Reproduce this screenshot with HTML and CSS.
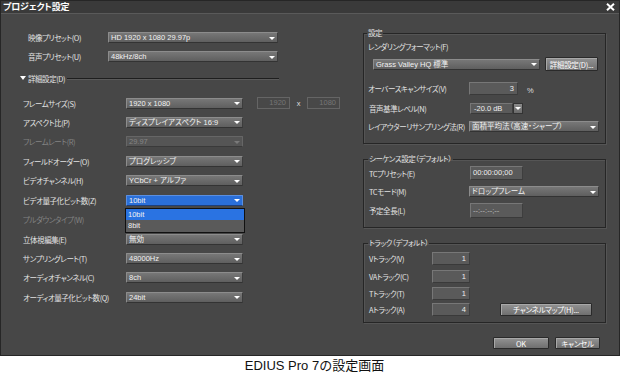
FILE: index.html
```html
<!DOCTYPE html>
<html lang="ja">
<head>
<meta charset="utf-8">
<title>プロジェクト設定</title>
<link rel="stylesheet" href="styles.css">
</head>
<body>
<div class="dialog">
  <div class="titlebar">
    <span class="title">プロジェクト設定</span>
    <svg class="close" width="9" height="8" viewBox="0 0 9 8"><path d="M1 0.8 L8 7.2 M8 0.8 L1 7.2" stroke="#fff" stroke-width="2"/></svg>
  </div>
  <div class="main">
    <div class="left">
      <div class="prow"><span class="plabel">映像プリセット(O)</span><div class="dd dd-preset"><span>HD 1920 x 1080 29.97p</span></div></div>
      <div class="prow"><span class="plabel">音声プリセット(U)</span><div class="dd dd-preset"><span>48kHz/8ch</span></div></div>
      <div class="dhead"><i class="tri"></i><span class="dhead-text">詳細設定(D)</span><span class="rule"></span></div>
      <div class="drows">
        <div class="drow"><span class="dlabel">フレームサイズ(S)</span><div class="dd dd-detail"><span>1920 x 1080</span></div><div class="box box-dis">1920</div><span class="times">x</span><div class="box box-dis">1080</div></div>
        <div class="drow"><span class="dlabel">アスペクト比(P)</span><div class="dd dd-detail"><span>ディスプレイアスペクト 16:9</span></div></div>
        <div class="drow dis"><span class="dlabel">フレームレート(R)</span><div class="dd dd-detail dd-dis"><span>29.97</span></div></div>
        <div class="drow"><span class="dlabel">フィールドオーダー(O)</span><div class="dd dd-detail"><span>プログレッシブ</span></div></div>
        <div class="drow"><span class="dlabel">ビデオチャンネル(H)</span><div class="dd dd-detail"><span>YCbCr + アルファ</span></div></div>
        <div class="drow"><span class="dlabel">ビデオ量子化ビット数(Z)</span><div class="dd dd-detail dd-sel"><span>10bit</span>
          <div class="popup"><div class="opt opt-sel">10bit</div><div class="opt">8bit</div></div></div></div>
        <div class="drow dis"><span class="dlabel">プルダウンタイプ(W)</span></div>
        <div class="drow"><span class="dlabel">立体視編集(E)</span><div class="dd dd-detail"><span>無効</span></div></div>
        <div class="drow"><span class="dlabel">サンプリングレート(T)</span><div class="dd dd-detail"><span>48000Hz</span></div></div>
        <div class="drow"><span class="dlabel">オーディオチャンネル(C)</span><div class="dd dd-detail"><span>8ch</span></div></div>
        <div class="drow"><span class="dlabel">オーディオ量子化ビット数(Q)</span><div class="dd dd-detail"><span>24bit</span></div></div>
      </div>
    </div>
    <div class="right">
      <fieldset class="grp grp1">
        <legend>設定</legend>
        <div class="g1-label">レンダリングフォーマット(F)</div>
        <div class="fmt-row"><div class="dd dd-fmt"><span>Grass Valley HQ 標準</span></div><div class="btn btn-detail">詳細設定(D)...</div></div>
        <div class="os-row"><span class="rlabel">オーバースキャンサイズ(V)</span><div class="box box-os">3</div><span class="pct">%</span></div>
        <div class="al-row"><span class="rlabel">音声基準レベル(N)</span><div class="box box-al">-20.0 dB</div><div class="spin"></div></div>
        <div class="rs-row"><span class="rlabel">レイアウターリサンプリング法(R)</span><div class="dd dd-wide"><span>面積平均法（高速・シャープ）</span></div></div>
      </fieldset>
      <fieldset class="grp grp2">
        <legend>シーケンス設定（デフォルト）</legend>
        <div class="tc-row"><span class="rlabel">TCプリセット(E)</span><div class="box box-tc">00:00:00;00</div></div>
        <div class="tm-row"><span class="rlabel">TCモード(M)</span><div class="dd dd-wide"><span>ドロップフレーム</span></div></div>
        <div class="len-row"><span class="rlabel">予定全長(L)</span><div class="box box-tc box-len">--:--:--;--</div></div>
      </fieldset>
      <fieldset class="grp grp3">
        <legend>トラック（デフォルト）</legend>
        <div class="trk trk-v"><span class="tlabel">Vトラック(V)</span><div class="box box-trk">1</div></div>
        <div class="trk trk-va"><span class="tlabel">VAトラック(C)</span><div class="box box-trk">1</div></div>
        <div class="trk trk-t"><span class="tlabel">Tトラック(T)</span><div class="box box-trk">1</div></div>
        <div class="trk trk-a"><span class="tlabel">Aトラック(A)</span><div class="box box-trk">4</div><div class="btn btn-map">チャンネルマップ(H)...</div></div>
      </fieldset>
      <div class="actions"><div class="btn btn-ok">OK</div><div class="btn btn-cancel">キャンセル</div></div>
    </div>
  </div>
</div>
<div class="caption">EDIUS Pro 7の設定画面</div>
</body>
</html>
```

FILE: styles.css
```css
* { box-sizing: border-box; }
html, body { margin: 0; padding: 0; background: #fff; }
body {
  width: 620px; height: 375px; overflow: hidden;
  font-family: "Liberation Sans", "Noto Sans CJK JP", sans-serif;
  font-feature-settings: "palt";
}
.dialog {
  width: 620px; height: 356px;
  background: #474747;
  border: 1px solid #262626;
  display: flex; flex-direction: column;
}
.titlebar {
  height: 13px; flex: none;
  background: #3a3a3a;
  border-bottom: 1px solid #5a5a5a;
  display: flex; align-items: center; justify-content: space-between;
  padding: 0 4px 0 2px;
}
.title { color: #fff; font-weight: bold; font-size: 9px; line-height: 12px; font-family: "Noto Sans CJK JP", sans-serif; letter-spacing: -0.2px; }
.close { display: block; }
.main { flex: 1; display: flex; }
.left { width: 362px; flex: none; padding-top: 14px; }
.right { width: 243px; flex: none; padding-top: 14px; }

/* label text */
.plabel, .dlabel, .rlabel, .tlabel, .g1-label, legend, .dhead-text {
  color: #e2e2e2; font-size: 7.5px; white-space: nowrap;
  font-family: "Noto Sans CJK JP", sans-serif;
  font-feature-settings: "palt";
  letter-spacing: -0.45px;
}

/* dropdowns */
.dd {
  position: relative;
  display: flex; align-items: center; justify-content: space-between;
  height: 11px;
  background: linear-gradient(#777, #5f5f5f);
  border: 1px solid #8c8c8c;
  border-bottom-color: #333; border-right-color: #3c3c3c;
  border-radius: 1px;
  color: #f2f2f2; font-size: 7.5px; line-height: 9px;
  padding: 0 2px 0 2px;
  white-space: nowrap;
}
.dd::after {
  content: ""; flex: none;
  width: 0; height: 0;
  border-left: 3px solid transparent; border-right: 3px solid transparent;
  border-top: 3px solid #fff;
  margin-top: 1px;
}
.dd-dis { background: #555; border-color: #666; border-bottom-color: #3a3a3a; color: #858585; }
.dd-dis::after { border-top-color: #7a7a7a; }
.dd-sel { background: #2a6fd9; border-color: #5a8fe0; border-bottom-color: #1d3f7a; }

.prow { height: 19px; display: flex; align-items: center; padding-left: 27px; }
.plabel { width: 80px; }
.dd-preset { width: 170px; }

.dhead { height: 18px; margin-top: 3px; display: flex; align-items: center; padding-left: 19px; }
.tri { width: 0; height: 0; border-left: 3px solid transparent; border-right: 3px solid transparent; border-top: 4px solid #fff; margin-right: 2px; }
.rule { flex: none; width: 212px; height: 1px; background: #1e1e1e; margin-left: 2px; box-shadow: 0 1px 0 #5a5a5a; }

.drows { margin-top: 6.3px; }
.drow { height: 19.45px; display: flex; align-items: center; padding-left: 22px; }
.dlabel { width: 103px; }
.dis .dlabel { color: #838383; }
.dd-detail { width: 117px; }

.box {
  height: 13px;
  background: #5a5a5a;
  border: 1px solid #777;
  border-bottom-color: #3a3a3a; border-right-color: #3e3e3e;
  color: #eee; font-size: 7.5px; line-height: 11px;
  padding: 0 3px; white-space: nowrap;
}
.box-dis { width: 33px; height: 12px; margin-left: 14px; background: #484848; border-color: #656565; color: #767676; text-align: right; line-height: 10px; }
.times { color: #ddd; font-size: 7.5px; width: 17px; text-align: center; }
.times + .box-dis { margin-left: 0; }

.popup {
  position: absolute; left: -2px; top: 12px; width: 120px;
  border: 1px solid #111; background: #5a5a5a; z-index: 2;
}
.opt { height: 11.5px; line-height: 11.5px; padding-left: 2px; color: #f2f2f2; font-size: 7.5px; }
.opt-sel { background: #2a73e2; }

/* right side */
.grp {
  margin: 0; min-width: 0;
  border: 1px solid #262626;
  box-shadow: inset 1px 1px 0 #555, 1px 1px 0 #555;
  padding: 0 0 0 4px;
}
legend { padding: 0 1px; line-height: 10px; height: 10px; margin-left: -1px; }
.grp1 { padding-bottom: 11px; }
.g1-label { margin-top: 3px; height: 12px; line-height: 12px; }
.fmt-row { margin-top: 4px; height: 14px; display: flex; align-items: center; padding-left: 5px; }
.dd-fmt { width: 167px; }
.btn {
  height: 14px;
  display: flex; align-items: center; justify-content: center;
  background: linear-gradient(#939393, #6f6f6f);
  border: 1px solid #2a2a2a;
  box-shadow: inset 1px 1px 0 #a8a8a8;
  border-radius: 1px;
  color: #fff; font-size: 7.5px; white-space: nowrap;
  font-family: "Noto Sans CJK JP", sans-serif;
  letter-spacing: -0.3px;
}
.btn-detail { width: 53px; margin-left: 5px; }
.os-row { margin-top: 11px; height: 13px; display: flex; align-items: center; }
.rlabel { width: 101px; }
.box-os { width: 49px; text-align: right; }
.pct { color: #ddd; font-size: 7.5px; margin-left: 9px; margin-top: 3px; }
.al-row { margin-top: 8px; height: 11px; display: flex; align-items: center; padding-left: 1px; }
.al-row .rlabel { width: 101px; }
.box-al { width: 43px; height: 11px; line-height: 9px; }
.spin {
  width: 10px; height: 11px;
  background: linear-gradient(#8a8a8a, #6a6a6a);
  border: 1px solid #333;
  display: flex; align-items: center; justify-content: center;
}
.spin::after { content: ""; width: 0; height: 0; border-left: 3px solid transparent; border-right: 3px solid transparent; border-top: 3px solid #fff; }
.rs-row { margin-top: 7px; height: 11px; display: flex; align-items: center; }
.dd-wide { width: 130px; }

.grp2, .grp3 { margin-top: 10px; padding-left: 5px; }
.grp2 { padding-bottom: 9px; }
.tc-row { margin-top: 2px; height: 14px; display: flex; align-items: center; }
.box-tc { width: 53px; height: 14px; line-height: 12px; padding-left: 2px; }
.tm-row { margin-top: 6px; height: 11px; display: flex; align-items: center; }
.tm-row .dd-wide { margin-left: -1px; }
.len-row { margin-top: 6px; height: 15px; display: flex; align-items: center; }
.box-len { height: 15px; line-height: 13px; color: #bbb; }

.grp3 { padding-bottom: 6px; }
.trk { height: 13px; display: flex; align-items: center; }
.trk-v { margin-top: 4px; }
.trk-va { margin-top: 5px; }
.trk-t { margin-top: 4px; }
.trk-a { margin-top: 3px; }
.tlabel { width: 63px; }
.box-trk { width: 38px; text-align: right; }
.btn-map { width: 92px; height: 13px; margin-left: 30px; }

.actions { margin-top: 14px; display: flex; justify-content: flex-end; gap: 6px; padding-right: 6px; }
.btn-ok { width: 56px; height: 12px; }
.btn-cancel { width: 45px; height: 12px; }

.caption {
  height: 19px; line-height: 19px;
  text-align: center; padding-left: 9px;
  color: #111; font-size: 13px;
  font-family: "Liberation Sans", "Noto Sans CJK JP", sans-serif;
  font-feature-settings: normal;
}
```
